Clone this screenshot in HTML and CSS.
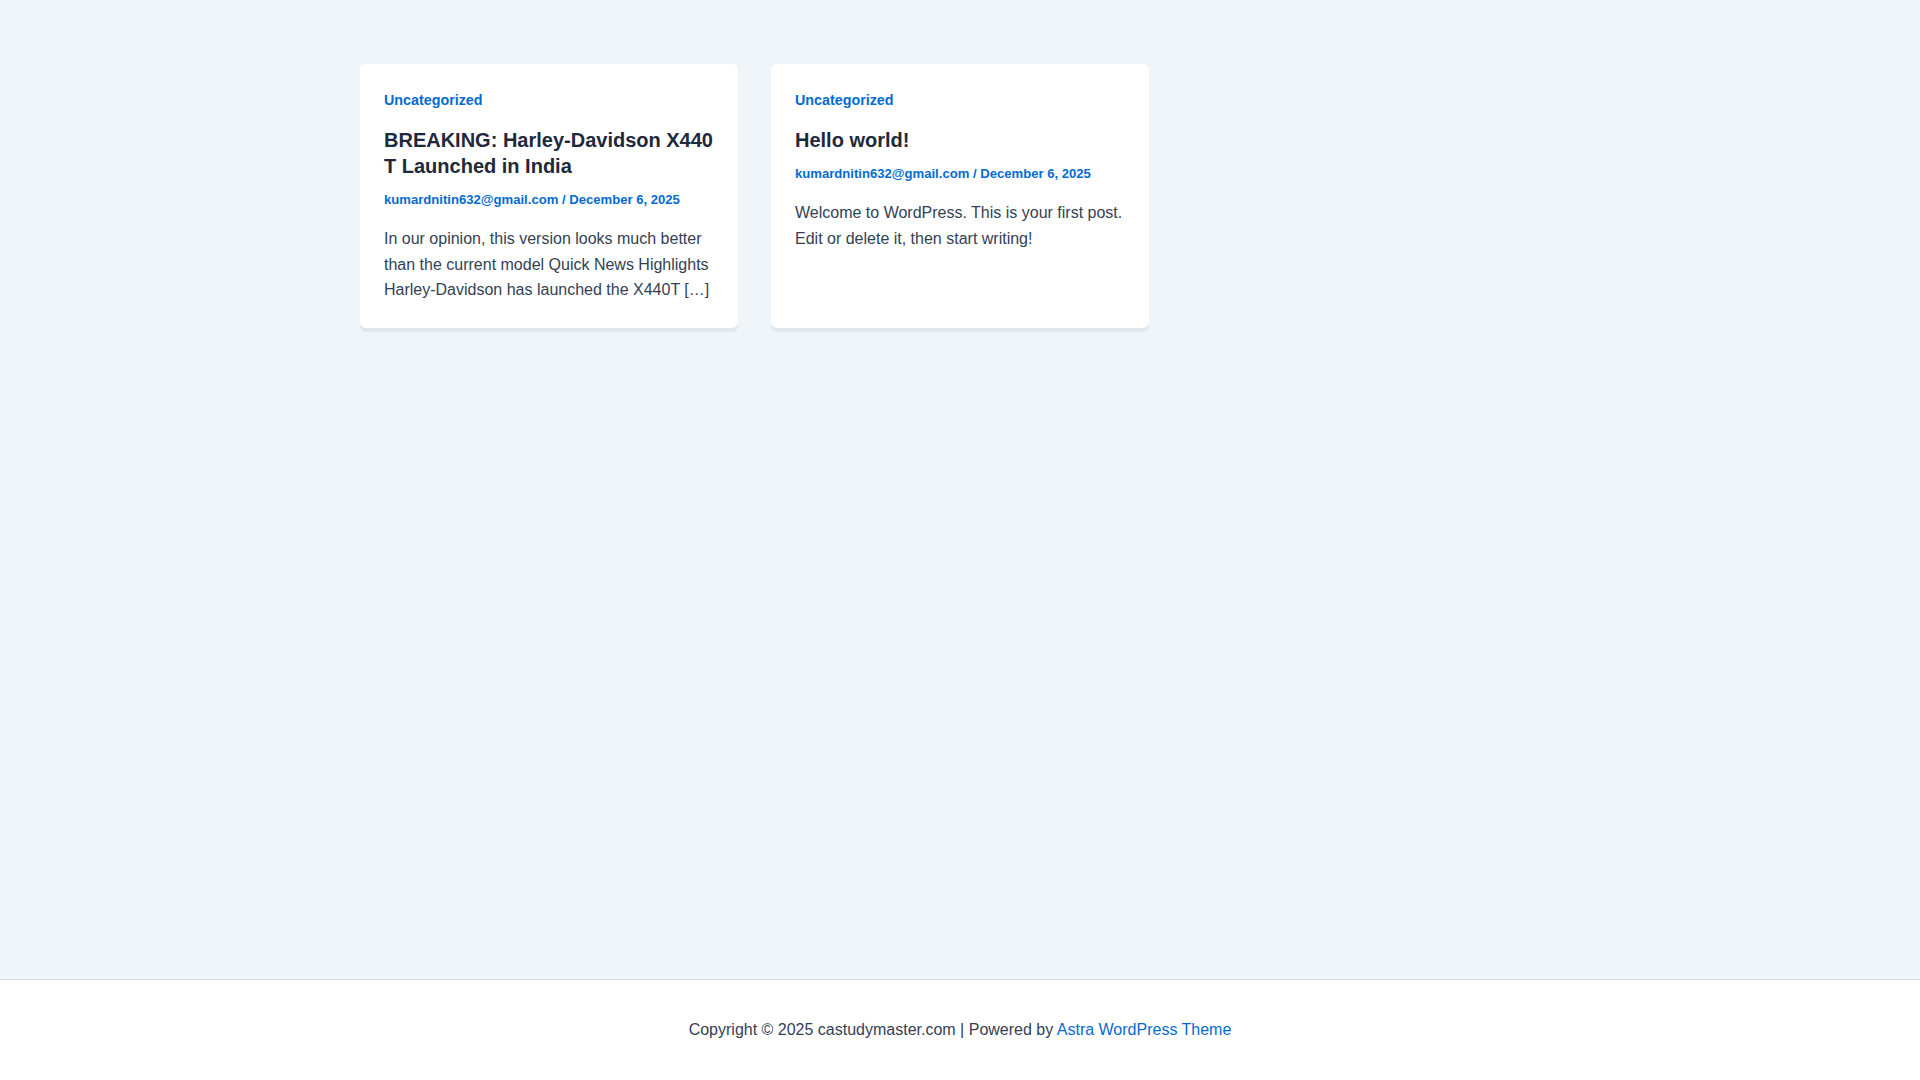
FILE: index.html
```html
<!DOCTYPE html>
<html lang="en">
<head>
<meta charset="utf-8">
<title>castudymaster.com</title>
<link rel="stylesheet" href="styles.css">
</head>
<body>
<main class="site-main">
  <div class="container">
    <div class="post-grid">
      <article class="post-card">
        <a class="post-cat" href="#">Uncategorized</a>
        <h2 class="post-title">BREAKING: Harley-Davidson X440 T Launched in India</h2>
        <div class="post-meta"><a href="#">kumardnitin632@gmail.com</a> / <a href="#">December 6, 2025</a></div>
        <p class="post-excerpt">In our opinion, this version looks much better than the current model Quick News Highlights Harley-Davidson has launched the X440T […]</p>
      </article>
      <article class="post-card">
        <a class="post-cat" href="#">Uncategorized</a>
        <h2 class="post-title">Hello world!</h2>
        <div class="post-meta"><a href="#">kumardnitin632@gmail.com</a> / <a href="#">December 6, 2025</a></div>
        <p class="post-excerpt">Welcome to WordPress. This is your first post. Edit or delete it, then start writing!</p>
      </article>
    </div>
  </div>
</main>
<footer class="site-footer">
  <div class="footer-text">Copyright © 2025 castudymaster.com | Powered by <a href="#">Astra WordPress Theme</a></div>
</footer>
</body>
</html>
```

FILE: styles.css
```css
* { box-sizing: border-box; }
html, body { margin: 0; padding: 0; }
body {
  font-family: "Liberation Sans", Arial, sans-serif;
  color: #334155;
  background: #f0f5fa;
  min-height: 100vh;
  display: flex;
  flex-direction: column;
}
a { color: #046bd2; text-decoration: none; }
.site-main {
  flex: 1;
  padding-top: 64px;
}
.container {
  width: 1200px;
  margin: 0 auto;
}
.post-grid {
  display: grid;
  grid-template-columns: repeat(3, 378px);
  column-gap: 33px;
}
.post-card {
  background: #ffffff;
  border-radius: 6px;
  padding: 24px 24px 25px;
  box-shadow: 0 4px 1px 0 rgba(30, 55, 90, 0.07);
  display: flex;
  flex-direction: column;
  align-items: flex-start;
}
.post-cat {
  display: block;
  font-size: 14.3px;
  font-weight: 700;
  line-height: 25px;
}
.post-title {
  margin: 14px 0 0;
  font-size: 20px;
  font-weight: 700;
  line-height: 26px;
  color: #1e293b;
}
.post-meta {
  margin-top: 10px;
  font-size: 13.1px;
  font-weight: 700;
  line-height: 21px;
  color: #046bd2;
}
.post-excerpt {
  margin: 16px 0 0;
  font-size: 16px;
  line-height: 25.6px;
  color: #334155;
}
.site-footer {
  height: 101px;
  background: #ffffff;
  border-top: 1px solid #d8dde4;
  display: flex;
  align-items: center;
  justify-content: center;
}
.footer-text {
  font-size: 16px;
  line-height: 24px;
  color: #334155;
}
```
